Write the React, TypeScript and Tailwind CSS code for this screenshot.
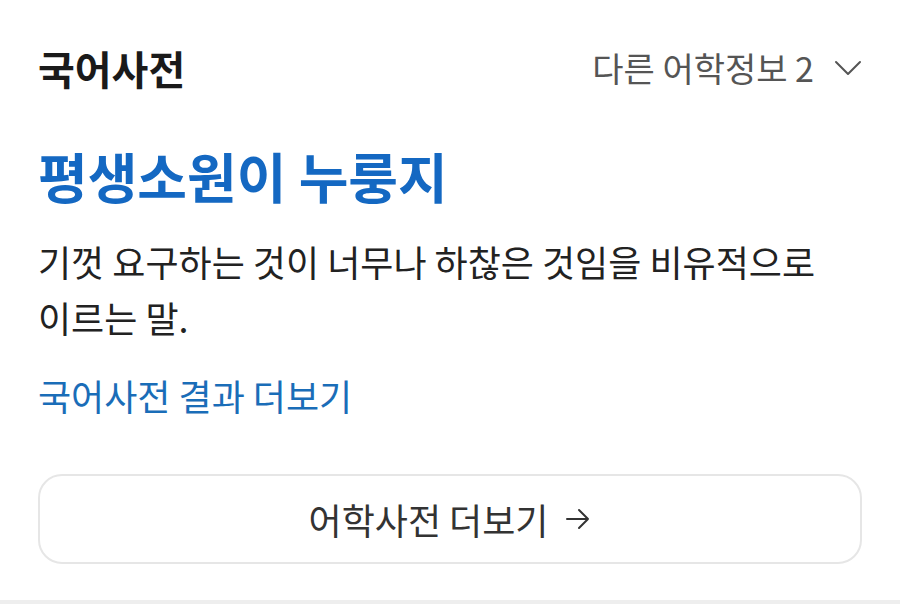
const FONT = { fontFamily: '"Noto Sans CJK KR", "Noto Sans", sans-serif' }

function ChevronDown() {
  return (
    <svg width="28" height="18" viewBox="0 0 28 18" fill="none" className="text-[#555]">
      <path d="M2 3 L14 15 L26 3" stroke="currentColor" strokeWidth="2" strokeLinecap="round" strokeLinejoin="round" />
    </svg>
  )
}

function ArrowRight() {
  return (
    <svg width="26" height="22" viewBox="0 0 26 22" fill="none" className="text-[#333]">
      <path d="M2 11 H23 M14 2 L23 11 L14 20" stroke="currentColor" strokeWidth="2" strokeLinecap="round" strokeLinejoin="round" />
    </svg>
  )
}

export default function App() {
  return (
    <div style={FONT} className="w-[900px] h-[604px] bg-white flex flex-col border-b-[4px] border-[#eeeeee] overflow-hidden">
      <div className="px-[38px] flex flex-col break-keep">
        {/* Header */}
        <div className="flex items-center justify-between h-[70px] mt-[33px]">
          <h2 className="text-[40px] font-bold text-[#1a1a1a] leading-none">국어사전</h2>
          <button className="flex items-center gap-[20px] text-[#555] text-[34px] leading-none">
            <span>다른 어학정보 2</span>
            <ChevronDown />
          </button>
        </div>

        {/* Word */}
        <h1 className="mt-[46px] text-[54px] font-bold text-[#1468c2] leading-none">
          평생소원이 누룽지
        </h1>

        {/* Definition */}
        <p className="mt-[30px] text-[36px] text-[#222] leading-[56px]">
          기껏 요구하는 것이 너무나 하찮은 것임을 비유적으로 이르는 말.
        </p>

        <a className="mt-[32px] text-[36px] text-[#1a6db8] leading-none">국어사전 결과 더보기</a>

        {/* More button */}
        <button className="mt-[61px] h-[90px] w-full rounded-[24px] border-2 border-[#e6e6e6] flex items-center justify-center gap-[17px]">
          <span className="text-[36px] text-[#333] leading-none">어학사전 더보기</span>
          <ArrowRight />
        </button>
      </div>
    </div>
  )
}
